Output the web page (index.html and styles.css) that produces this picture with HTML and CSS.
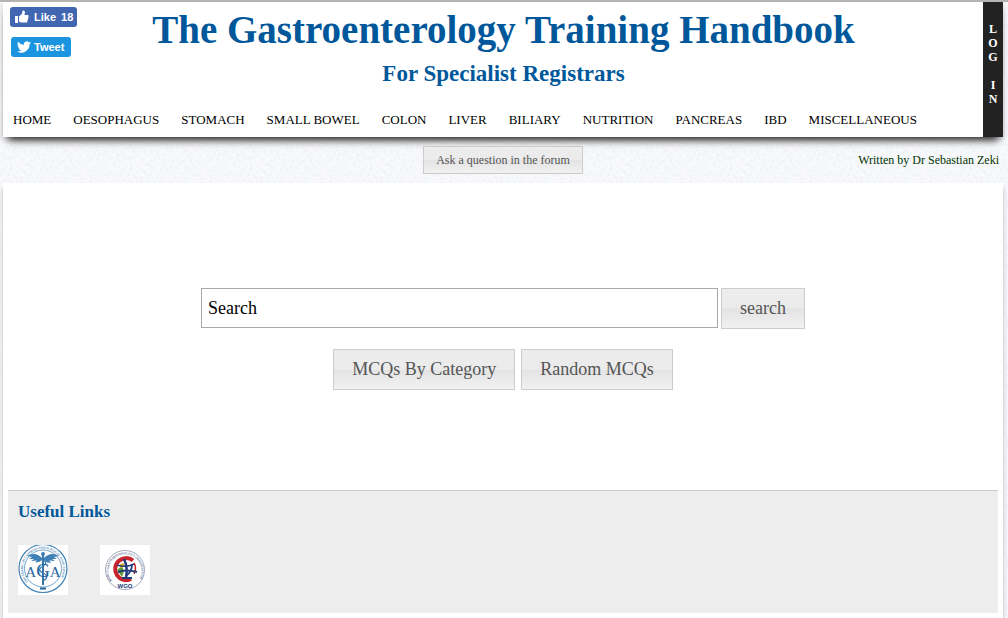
FILE: index.html
```html
<!DOCTYPE html>
<html lang="en">
<head>
<meta charset="utf-8">
<title>The Gastroenterology Training Handbook</title>
<link rel="stylesheet" href="styles.css">
</head>
<body>
<header class="header">
  <div class="masthead">
    <div class="social">
      <button class="share like" type="button">
        <svg width="14" height="14" viewBox="0 0 14 14" aria-hidden="true"><path fill="#fff" d="M0 6h3v7H0zM4 6.500 7 3.800 7.500 1C7.700 0 10 .3 10 2.400L9.500 5H12.500c1.300 0 1.400 1.500.7 2 .6.6.3 1.500-.3 1.800.4.6.1 1.400-.5 1.600.3 1.400-.2 2.100-1.200 2.100H6L4 11.500z"/></svg>
        <span>Like</span><span>18</span>
      </button>
      <button class="share tweet" type="button">
        <svg width="14" height="14" viewBox="0 0 24 24" aria-hidden="true"><path fill="#fff" d="M24 4.600a10 10 0 0 1-2.800.8 5 5 0 0 0 2.100-2.700 10 10 0 0 1-3.100 1.200 4.900 4.900 0 0 0-8.400 4.500A14 14 0 0 1 1.700 3.200a4.900 4.900 0 0 0 1.500 6.500 5 5 0 0 1-2.200-.6 4.900 4.900 0 0 0 3.900 4.900 5 5 0 0 1-2.200.1 4.900 4.900 0 0 0 4.600 3.400A10 10 0 0 1 0 19.500 14 14 0 0 0 21.500 7a10 10 0 0 0 2.500-2.400z"/></svg>
        <span>Tweet</span>
      </button>
    </div>
    <div class="titles">
      <h1>The Gastroenterology Training Handbook</h1>
      <h2>For Specialist Registrars</h2>
    </div>
    <nav class="nav">
      <a href="#">HOME</a>
      <a href="#">OESOPHAGUS</a>
      <a href="#">STOMACH</a>
      <a href="#">SMALL BOWEL</a>
      <a href="#">COLON</a>
      <a href="#">LIVER</a>
      <a href="#">BILIARY</a>
      <a href="#">NUTRITION</a>
      <a href="#">PANCREAS</a>
      <a href="#">IBD</a>
      <a href="#">MISCELLANEOUS</a>
    </nav>
  </div>
  <a class="login" href="#">L<br>O<br>G<br><br>I<br>N</a>
</header>
<div class="subbar">
  <button class="btn btn-small" type="button">Ask a question in the forum</button>
  <p class="author">Written by Dr Sebastian Zeki</p>
</div>
<main class="page">
  <section class="tools">
    <form class="search">
      <input class="field" type="text" value="Search" aria-label="Search">
      <button class="btn" type="button">search</button>
    </form>
    <div class="quizzes">
      <button class="btn" type="button">MCQs By Category</button>
      <button class="btn" type="button">Random MCQs</button>
    </div>
  </section>
  <footer class="links">
    <h3>Useful Links</h3>
    <div class="logos">
      <a href="#" aria-label="American Gastroenterological Association">
        <svg width="50" height="50" viewBox="0 0 50 50">
          <defs><path id="agaRing" d="M10 37A20 20 0 1 1 40 37"/></defs>
          <g fill="none" stroke="#3f80b5">
            <circle cx="25" cy="23.500" r="24" stroke-width="1.200"/>
            <circle cx="25" cy="23.500" r="18.500" stroke-width=".7"/>
            <path d="M25 8v32" stroke="#1e659e" stroke-width="1.800"/>
            <path d="M22 14c7 2 7 5 3 7s-5 5 0 7 5 5 0 8" stroke-width="1.300"/>
          </g>
          <path fill="#3f80b5" d="M25 14C20 8 14 8 9 11l5 1-3 2 5 0-3 2 6-.5-2 2q5 0 8-3.500C28 18 31 18 33 17.500l-2-2 6 .5-3-2 5 0-3-2 5-1C36 8 30 8 25 14z"/>
          <circle cx="25" cy="9" r="2" fill="#3f80b5"/>
          <path d="M22 43.500h6" stroke="#1e659e" stroke-width="2"/>
          <text class="aga-name" x="25" y="32">A<tspan class="aga-mid">G</tspan>A</text>
          <text class="aga-ring"><textPath href="#agaRing">THE AMERICAN GASTROENTEROLOGICAL ASSOCIATION</textPath></text>
        </svg>
      </a>
      <a href="#" aria-label="World Gastroenterology Organisation">
        <svg width="50" height="50" viewBox="0 0 50 50">
          <defs><path id="wgoRing" d="M12 36A16.500 16.500 0 1 1 38 36"/></defs>
          <circle cx="25" cy="25" r="19.500" fill="none" stroke="#8b93b0" stroke-width=".8"/>
          <path d="M33 15.500A11 11 0 1 0 31 34" fill="none" stroke="#c8232c" stroke-width="4"/>
          <path d="M34 18q3 5 0 11" fill="none" stroke="#c8232c" stroke-width="1.500"/>
          <path d="M17 25l5-4 2 5-2 6z" fill="#5e9c35"/>
          <path d="M20 19l4-1v4l-4 1z" fill="#e8b52c"/>
          <g fill="none" stroke="#203a7c">
            <path d="M24 14q4 8 2 19" stroke-width="2.500"/>
            <path d="M17 20q9 3 17-1" stroke-width="1.500"/>
            <path d="M18 27q8-3 19 0" stroke-width="2"/>
            <path d="M32 19q0 8-6 12M22 33h10" stroke-width="1.800"/>
          </g>
          <text class="wgo-ring"><textPath href="#wgoRing">WORLD GASTROENTEROLOGY ORGANISATION</textPath></text>
          <text class="wgo-name" x="25" y="43">WGO</text>
        </svg>
      </a>
    </div>
  </footer>
</main>
</body>
</html>
```
FILE: styles.css
```css
* { box-sizing: border-box; }

body {
  margin: 0;
  padding: 0 5px 0 3px;
  min-height: 100vh;
  display: flex;
  flex-direction: column;
  border-top: 2px solid #b4b5b3;
  font-family: "Liberation Serif", serif;
  color: #000;
  background: #f9fafd url("data:image/svg+xml,%3Csvg xmlns='http://www.w3.org/2000/svg' width='120' height='120'%3E%3Cfilter id='n' x='0' y='0' width='1' height='1'%3E%3CfeTurbulence type='fractalNoise' baseFrequency='.3' numOctaves='2' stitchTiles='stitch'/%3E%3CfeColorMatrix values='0 0 0 0 .88 0 0 0 0 .89 0 0 0 0 .94 2.4 0 0 0 -.85'/%3E%3C/filter%3E%3Crect width='120' height='120' filter='url(%23n)'/%3E%3C/svg%3E");
}

h1, h2, h3, p { margin: 0; }
a { color: inherit; text-decoration: none; }
button, input { font-family: inherit; }

.header {
  display: flex;
  position: relative;
  background: #fff;
  box-shadow: 0 8px 8px -5px #222, 0 2px 5px #ccc;
}

.masthead {
  flex: 1;
  display: grid;
  grid-template-columns: 80px 1fr 66px;
  padding: 5px 0 8px 7px;
}

.social {
  display: flex;
  flex-direction: column;
  align-items: flex-start;
  gap: 10px;
}

.share {
  display: flex;
  align-items: center;
  height: 20px;
  border: 0;
  border-radius: 3px;
  color: #fff;
  font: bold 11px "Liberation Sans", sans-serif;
}

.like { background: #4267b2; gap: 5px; padding: 0 4px 0 5px; }
.tweet { background: #1b95e0; margin-left: 1px; gap: 3px; padding: 0 7px 0 6px; }

.titles { padding-top: 1px; text-align: center; color: #00589b; }
h1 { font-size: 39px; line-height: 44px; white-space: nowrap; }
h2 { font-size: 23px; line-height: 44px; }

.nav {
  grid-column: 1 / -1;
  display: flex;
  gap: 22px;
  padding: 15px 3px 0;
  font-size: 13px;
  line-height: 18px;
  white-space: nowrap;
}

.login {
  width: 20px;
  padding-top: 20px;
  background: #222;
  color: #fff;
  font-size: 12px;
  font-weight: bold;
  line-height: 14px;
  text-align: center;
}

.subbar {
  display: grid;
  grid-template-columns: 1fr auto 1fr;
  align-items: center;
  padding: 9px 4px;
}

.btn {
  height: 41px;
  padding: 0 18px;
  border: 1px solid #ccc;
  color: #555;
  font-size: 18px;
  background: linear-gradient(#ededed, #ebebeb 50%, #e3e3e3 50%, #f1f1f1);
}

.subbar .btn { grid-column: 2; position: relative; }
.btn-small { height: 28px; padding: 0 12px; font-size: 12px; }
.author { text-align: right; font-size: 12px; color: #003300; }

.page {
  flex: 1;
  display: flex;
  flex-direction: column;
  padding: 0 5px 5px;
  background: #fff;
  box-shadow: 0 5px 5px #bbb;
}

.tools {
  flex: 1;
  display: flex;
  flex-direction: column;
  align-items: center;
  gap: 20px;
  padding: 105px 0 100px;
}

.search { display: flex; gap: 3px; width: 61%; }

.field {
  flex: 1;
  min-width: 0;
  height: 40px;
  padding: 0 6px;
  border: 1px solid #a9a9a9;
  background: #fff;
  color: #000;
  font-size: 18px;
}

.quizzes { display: flex; gap: 6px; }

.links {
  padding: 10px 10px 18px;
  border-top: 1px solid #ccc;
  background: #ededed;
}

h3 { font-size: 17px; line-height: 22px; color: #00589b; }

.logos { display: flex; gap: 32px; padding-top: 22px; }
.logos svg { display: block; background: #fff; }

.aga-name { font: 15px "Liberation Serif", serif; fill: #1e659e; text-anchor: middle; }
.aga-mid { font-size: 19px; }
.aga-ring { font: bold 3px "Liberation Serif", serif; fill: #3f80b5; }
.wgo-ring { font: bold 3px "Liberation Sans", sans-serif; fill: #7078a0; }
.wgo-name { font: bold 6px "Liberation Sans", sans-serif; fill: #203a7c; text-anchor: middle; }
```
